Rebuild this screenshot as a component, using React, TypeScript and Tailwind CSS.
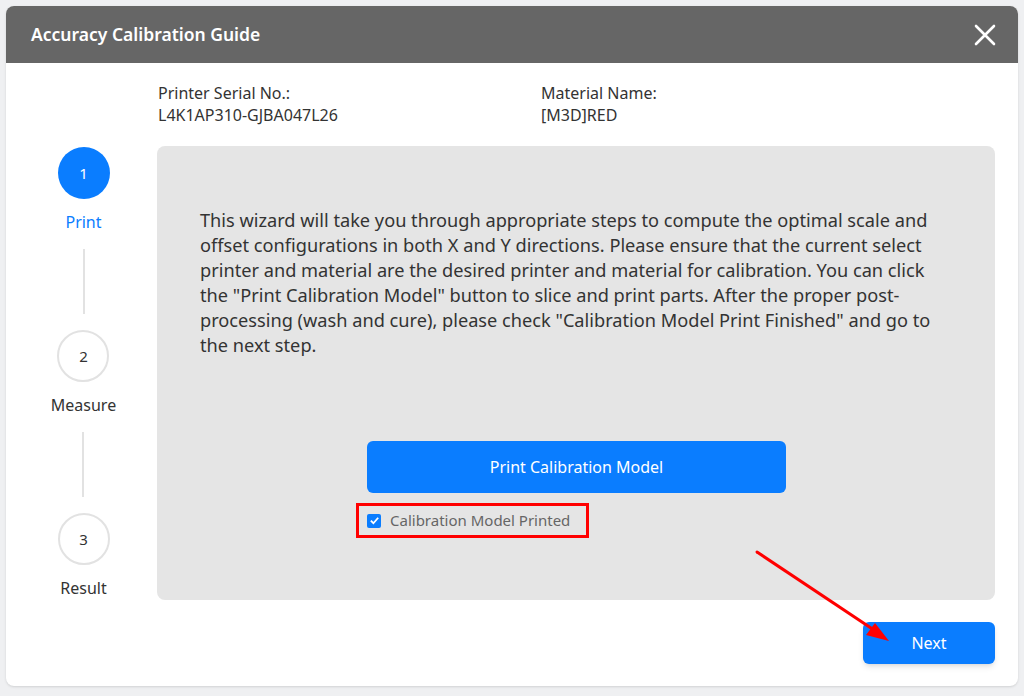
import React from 'react'

const font = { fontFamily: '"Noto Sans", "Open Sans", sans-serif' }

function Step({ n, label, active, last }: { n: number; label: string; active?: boolean; last?: boolean }) {
  return (
    <div className="flex flex-col items-center">
      <div
        className={
          active
            ? 'w-[52px] h-[52px] rounded-full bg-[#0a7dff] text-white flex items-center justify-center text-[15px]'
            : 'w-[52px] h-[52px] rounded-full bg-white border-2 border-[#e2e2e2] text-[#333] flex items-center justify-center text-[15px]'
        }
      >
        {n}
      </div>
      <div className={active ? 'mt-[12px] h-[22px] leading-[22px] text-[16px] text-[#0a7dff]' : 'mt-[12px] h-[22px] leading-[22px] text-[16px] text-[#333]'}>
        {label}
      </div>
      {!last && <div className="my-[16px] w-[2px] h-[65px] bg-[#e2e2e2]" />}
    </div>
  )
}

export default function App() {
  return (
    <div className="w-[1024px] h-[696px] bg-[#eff0f2] pt-[6px] px-[6px] pb-[10px]" style={font}>
      <div className="relative h-full bg-white rounded-[8px] flex flex-col shadow-sm">
        {/* header */}
        <div className="h-[57px] shrink-0 bg-[#666666] rounded-t-[8px] flex items-center justify-between pl-[25px] pr-[22px]">
          <span className="text-white text-[17.5px] font-semibold">Accuracy Calibration Guide</span>
          <svg width="22" height="22" viewBox="0 0 22 22">
            <path d="M2 2 L20 20 M20 2 L2 20" stroke="white" strokeWidth="2.6" strokeLinecap="round" />
          </svg>
        </div>

        {/* printer info */}
        <div className="flex pl-[152px] pt-[19px] text-[16px] leading-[22px] text-[#333]">
          <div className="w-[383px]">
            <div>Printer Serial No.:</div>
            <div>L4K1AP310-GJBA047L26</div>
          </div>
          <div>
            <div>Material Name:</div>
            <div>[M3D]RED</div>
          </div>
        </div>

        {/* main */}
        <div className="flex mt-[20px] pr-[23px]">
          <div className="w-[155px] shrink-0 flex flex-col items-center pt-[1px]">
            <Step n={1} label="Print" active />
            <Step n={2} label="Measure" />
            <Step n={3} label="Result" last />
          </div>
          <div className="flex-1 h-[454px] bg-[#e5e5e5] rounded-[8px] pl-[43px] pt-[62px] ml-[-4px]">
            <p className="text-[18.2px] leading-[25px] text-[#333]">
              This wizard will take you through appropriate steps to compute the optimal scale and
              <br />
              offset configurations in both X and Y directions. Please ensure that the current select
              <br />
              printer and material are the desired printer and material for calibration. You can click
              <br />
              the "Print Calibration Model" button to slice and print parts. After the proper post-
              <br />
              processing (wash and cure), please check "Calibration Model Print Finished" and go to
              <br />
              the next step.
            </p>
            <div className="ml-[167px] mt-[83px] w-[419px]">
              <button className="w-full h-[52px] rounded-[6px] bg-[#0a7dff] text-white text-[16px]">
                Print Calibration Model
              </button>
              <div className="ml-[-11px] mt-[10px] w-[233px] h-[35px] border-[3px] border-[#ff0000] flex items-center pl-[8px] gap-[9px]">
                <span className="w-[14px] h-[14px] rounded-[2px] bg-[#0a7dff] flex items-center justify-center">
                  <svg width="11" height="11" viewBox="0 0 12 12">
                    <path d="M2 6.2 L4.8 9 L10 3" stroke="white" strokeWidth="2" fill="none" />
                  </svg>
                </span>
                <span className="text-[15px] text-[#666]">Calibration Model Printed</span>
              </div>
            </div>
          </div>
        </div>

        {/* footer */}
        <div className="flex justify-end pr-[23px] mt-[22px]">
          <button className="w-[132px] h-[42px] rounded-[6px] bg-[#0a7dff] text-white text-[16px] shadow-md">Next</button>
        </div>

        {/* annotation arrow */}
        <svg className="absolute left-0 top-0 pointer-events-none" width="1012" height="680">
          <line x1="751" y1="546" x2="874" y2="628" stroke="#f00" strokeWidth="3" strokeLinecap="round" />
          <polygon points="883,635 860,629 869,617" fill="#f00" />
        </svg>
      </div>
    </div>
  )
}
